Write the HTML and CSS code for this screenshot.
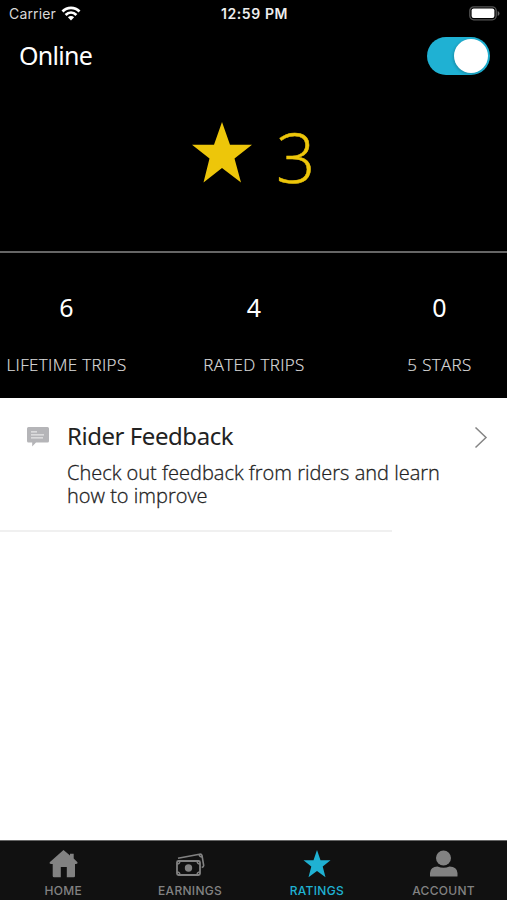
FILE: index.html
```html
<!DOCTYPE html>
<html lang="en">
<head>
    <meta charset="UTF-8">
    <meta name="viewport" content="width=device-width, initial-scale=1.0">
    <title>Ratings</title>
    <link rel="stylesheet" href="styles.css">
</head>
<body>
    <header class="status-bar">
        <div class="carrier">
            <span>Carrier</span>
            <svg class="wifi" width="20" height="15" viewBox="0 0 20 15">
                <g fill="none" stroke="#fff" stroke-width="2.8">
                    <path d="M1.5 5.4C6.3 .6 13.7 .6 18.5 5.4"/>
                    <path d="M4.6 9C7.8 5.9 12.2 5.9 15.4 9"/>
                </g>
                <path d="M6.9 11.2C8.7 9.6 11.3 9.6 13.1 11.2L10 14.5Z" fill="#fff"/>
            </svg>
        </div>
        <div class="time">12:59 PM</div>
        <svg class="battery" width="31" height="15" viewBox="0 0 31 15">
            <rect x=".8" y=".8" width="26.4" height="13" rx="4" fill="none" stroke="#555" stroke-width="1.3"/>
            <rect x="2.6" y="2.6" width="22.8" height="9.4" rx="2" fill="#fff"/>
            <path d="M28.7 5v5q1.8-.8 1.8-2.5t-1.8-2.5z" fill="#666"/>
        </svg>
    </header>

    <div class="online-row">
        <span class="online-label">Online</span>
        <div class="toggle"><div class="toggle-knob"></div></div>
    </div>

    <section class="score">
        <svg class="score-star" width="60" height="61" viewBox="0 0 60 61">
            <path d="M30 0L38 22.7H60L42.5 36.5L49 60.5L30 46L11.5 60.5L17.5 36.5L0 22.7H22Z" fill="#edc60a"/>
        </svg>
        <span class="score-value">3</span>
    </section>

    <section class="stats">
        <div class="stat">
            <div class="stat-value">6</div>
            <div class="stat-label">LIFETIME TRIPS</div>
        </div>
        <div class="stat">
            <div class="stat-value">4</div>
            <div class="stat-label">RATED TRIPS</div>
        </div>
        <div class="stat">
            <div class="stat-value">0</div>
            <div class="stat-label">5 STARS</div>
        </div>
    </section>

    <main class="content">
        <div class="feedback">
            <svg class="feedback-icon" width="22" height="21" viewBox="0 0 22 21">
                <path d="M1.5 0h19q1.5 0 1.5 1.5v12.5q0 1.5-1.5 1.5H9L5.2 19.5V15.5H1.5Q0 15.5 0 14V1.5Q0 0 1.5 0z" fill="#b5b5b8"/>
                <path d="M4 4.9h6M4 7.9h13M4 10.9h12" stroke="#f3f3f3" stroke-width="1"/>
            </svg>
            <div class="feedback-text">
                <div class="feedback-title">Rider Feedback</div>
                <p class="feedback-desc">Check out feedback from riders and learn how to improve</p>
            </div>
            <svg class="chevron" width="14" height="23" viewBox="0 0 14 23">
                <path d="M1.5 .5L12 10.5L1.5 20.5" fill="none" stroke="#858585" stroke-width="1.5"/>
            </svg>
        </div>
        <div class="divider"></div>
    </main>

    <nav class="tabs">
        <div class="tab">
            <svg width="30" height="28" viewBox="0 0 30 28">
                <path d="M15.5 0L22 5.4V3.8H25.7V8.6L29.500 12.200Q30 14 28 14H27V26Q27 27.300 25.700 27.300H18.800V17H12.800V27.300H6Q4.700 27.300 4.700 26V14H3Q1 14 1.700 12.200Z" fill="#828282"/>
            </svg>
            <span>HOME</span>
        </div>
        <div class="tab">
            <svg width="30" height="28" viewBox="0 0 30 28">
                <g fill="none" stroke="#828282">
                    <path d="M3 8.3L24.500 4.200Q26.500 3.800 27 5.500L28.700 15.500Q28.700 17 26.700 17.500" stroke-width="1.6"/>
                    <path d="M24 4.500Q24.500 7 27.200 7" stroke-width="1.3"/>
                    <rect x="2" y="11" width="23" height="14" rx="1.500" stroke-width="1.8"/>
                    <path d="M5 11Q5 14 2 14M22 11Q22 14 25 14M5 25Q5 22 2 22M22 25Q22 22 25 22" stroke-width="1.300"/>
                </g>
                <circle cx="13.500" cy="18" r="3.700" fill="#828282"/>
            </svg>
            <span>EARNINGS</span>
        </div>
        <div class="tab tab-active">
            <svg width="30" height="28" viewBox="0 0 30 28">
                <path d="M15 0L18.500 10.200H28.500L20.700 16.500L23.500 27.200L15 21L6.500 27.200L9.300 16.500L1.500 10.200H11.500Z" fill="#1fb1d3"/>
            </svg>
            <span>RATINGS</span>
        </div>
        <div class="tab">
            <svg width="30" height="28" viewBox="0 0 30 28">
                <circle cx="14.500" cy="8" r="7.500" fill="#828282"/>
                <path d="M1 26V23Q1.500 16.500 8.500 16.500Q14.500 19 20.500 16.500Q28 16.500 28.500 23V26Q28.500 26.500 28 26.500H1.500Q1 26.500 1 26Z" fill="#828282"/>
            </svg>
            <span>ACCOUNT</span>
        </div>
    </nav>
</body>
</html>
```

FILE: styles.css
```css
* {
    box-sizing: border-box;
}
body {
    margin: 0;
    height: 900px;
    display: flex;
    flex-direction: column;
    overflow: hidden;
    background: #000;
    color: #fff;
    font-family: "Noto Sans", "Open Sans", sans-serif;
}
svg {
    display: block;
    flex: none;
}
.status-bar {
    height: 27px;
    padding: 0 7px 0 9px;
    display: grid;
    grid-template-columns: 1fr auto 1fr;
    align-items: center;
    font-family: Inter, sans-serif;
    font-size: 14px;
}
.carrier {
    display: flex;
    align-items: center;
    gap: 5px;
    color: #d8d8d8;
    letter-spacing: 0.15px;
}
.wifi {
    margin-bottom: 1px;
}
.time {
    font-size: 14px;
    font-weight: 600;
    color: #eee;
    letter-spacing: 0.6px;
}
.battery {
    justify-self: end;
    margin-bottom: 1px;
}
.online-row {
    height: 57px;
    padding: 0 17px 0 19px;
    display: flex;
    align-items: center;
    justify-content: space-between;
}
.online-label {
    font-size: 25px;
    line-height: 34px;
    letter-spacing: -0.7px;
    margin-bottom: 1px;
}
.toggle {
    width: 63px;
    height: 38px;
    padding: 2px;
    border-radius: 19px;
    background: #1fb1d3;
    display: flex;
    justify-content: flex-end;
}
.toggle-knob {
    width: 34px;
    height: 34px;
    border-radius: 50%;
    background: #fff;
    box-shadow: -1px 1px 3px rgba(0, 0, 0, 0.2);
}
.score {
    height: 167px;
    padding: 38px 0 0 192px;
    display: flex;
    gap: 24px;
}
.score-value {
    font-family: "Open Sans", sans-serif;
    font-size: 69px;
    font-weight: 300;
    line-height: 68px;
    color: #edc60a;
    -webkit-text-stroke: 0.5px #edc60a;
}
.stats {
    height: 147px;
    border-top: 2px solid #666;
    display: grid;
    grid-template-columns: 133px 242px 129px;
    text-align: center;
}
.stat {
    padding-top: 36px;
}
.stat-value {
    font-size: 25px;
    line-height: 36px;
}
.stat-label {
    margin-top: 28px;
    font-family: "Open Sans", sans-serif;
    font-size: 17px;
    font-weight: 300;
    line-height: 24px;
    letter-spacing: 0.35px;
    color: #ddd;
    white-space: nowrap;
    -webkit-text-stroke: 0.2px #ddd;
}
.content {
    flex: 1;
    background: #fff;
}
.feedback {
    height: 132px;
    padding: 29px 19px 0 27px;
    display: flex;
}
.feedback-text {
    flex: 1;
    margin: -8px 0 0 18px;
}
.feedback-title {
    font-size: 24px;
    line-height: 34px;
    letter-spacing: -0.45px;
    color: #222;
}
.feedback-desc {
    width: 390px;
    margin: 8px 0 0;
    font-family: "Open Sans", sans-serif;
    font-size: 20px;
    font-weight: 300;
    line-height: 23px;
    color: #222;
    -webkit-text-stroke: 0.3px #222;
}
.divider {
    width: 392px;
    height: 2px;
    background: #f0f0f0;
}
.tabs {
    height: 60px;
    padding-bottom: 2px;
    border-top: 1px solid #666;
    background: #111;
    display: grid;
    grid-template-columns: repeat(4, 1fr);
}
.tab {
    padding-top: 9px;
    display: flex;
    flex-direction: column;
    align-items: center;
    gap: 5px;
    font-family: Inter, sans-serif;
    font-size: 12px;
    font-weight: 500;
    line-height: 16px;
    letter-spacing: 0.3px;
    color: #828282;
}
.tab-active {
    color: #1fb1d3;
}
```
